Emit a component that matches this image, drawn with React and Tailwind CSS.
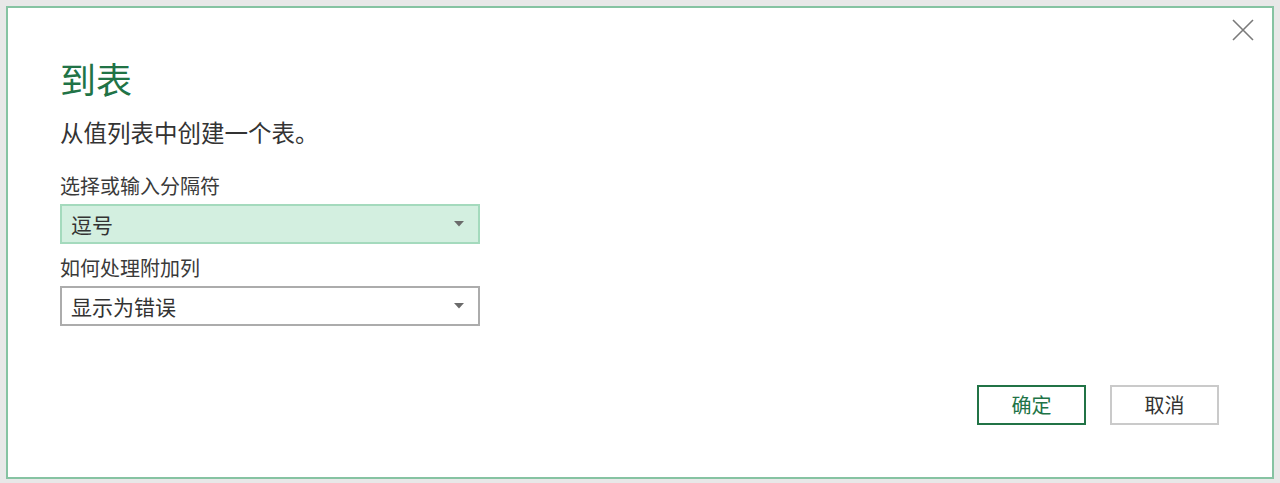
import React from 'react';

const font = { fontFamily: '"Noto Sans CJK SC", "Noto Sans", sans-serif' };

function Arrow() {
  return (
    <svg width="10" height="6" viewBox="0 0 10 6" className="shrink-0">
      <path d="M0 0 H10 L5 5.5 Z" fill="#6b6b6b" />
    </svg>
  );
}

function Select({ value, active }) {
  return (
    <div
      className={
        'flex h-[40px] w-[420px] items-center justify-between border-2 pl-[9px] pr-[14px] ' +
        (active ? 'border-[#a4dabd] bg-[#d3efe0]' : 'border-[#acacac] bg-white')
      }
    >
      <span className="text-[21px] leading-[28px] text-[#333333]">{value}</span>
      <Arrow />
    </div>
  );
}

export default function App() {
  return (
    <div className="h-[483px] w-[1280px] bg-[#e8e8e8] p-[6px]" style={font}>
      <div className="relative flex h-[473px] flex-col border-2 border-[#86c3a2] bg-white pl-[52px] pr-[53px]">
        <button className="absolute right-[17px] top-[10px] flex h-[24px] w-[24px] items-center justify-center">
          <svg width="22" height="22" viewBox="0 0 22 22">
            <path d="M1 1 L21 21 M21 1 L1 21" stroke="#7a7a7a" strokeWidth="1.6" fill="none" />
          </svg>
        </button>

        <h1 className="mt-[52px] h-[36px] text-[36px] font-normal leading-[36px] text-[#217346]">到表</h1>

        <p className="mt-[21px] h-[30px] text-[23.5px] leading-[30px] text-[#333333]">从值列表中创建一个表。</p>

        <label className="mt-[24px] h-[30px] text-[20px] leading-[30px] text-[#3a3a3a]">选择或输入分隔符</label>
        <div className="mt-[3px]">
          <Select value="逗号" active />
        </div>

        <label className="mt-[9px] h-[30px] text-[20px] leading-[30px] text-[#3a3a3a]">如何处理附加列</label>
        <div className="mt-[3px]">
          <Select value="显示为错误" />
        </div>

        <div className="mt-[59px] flex justify-end gap-[24px]">
          <button className="flex h-[40px] w-[109px] items-center justify-center border-2 border-[#217346] text-[20px] text-[#217346]">
            确定
          </button>
          <button className="flex h-[40px] w-[109px] items-center justify-center border-2 border-[#cacaca] text-[20px] text-[#333333]">
            取消
          </button>
        </div>
      </div>
    </div>
  );
}
